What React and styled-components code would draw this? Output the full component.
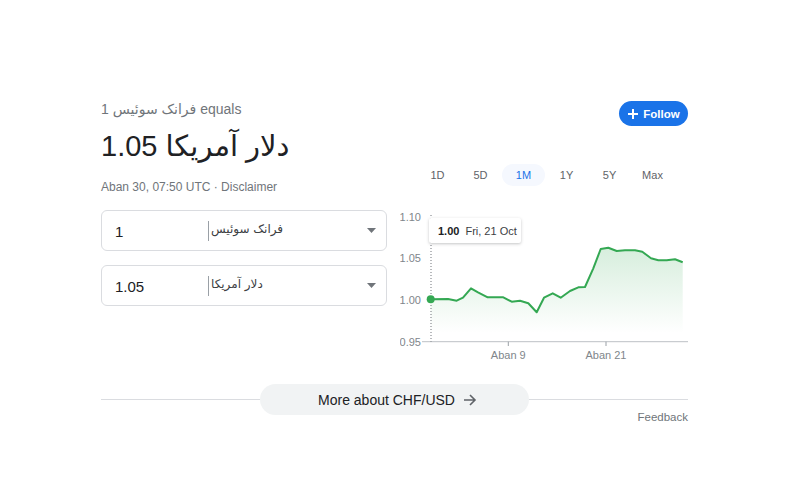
import React from 'react'
import styled, { createGlobalStyle } from 'styled-components'

const GlobalStyle = createGlobalStyle`
  body {
    margin: 0;
    background: #fff;
    font-family: 'Liberation Sans', 'DejaVu Sans', Arial, sans-serif;
    color: #202124;
  }
`

const Page = styled.div`
  padding: 101px 0 40px 101px;
  width: 587px;
`

const Card = styled.div`
  display: grid;
  grid-template-columns: 286px 1fr;
  column-gap: 13px;
`

const LeftCol = styled.div`
  display: flex;
  flex-direction: column;
`

const Equals = styled.div`
  font-size: 14px;
  line-height: 16px;
  color: #70757a;
`

const Result = styled.div`
  margin-top: 11px;
  font-size: 29px;
  line-height: 36px;
  color: #202124;
`

const Stamp = styled.div`
  margin-top: 15px;
  font-size: 12px;
  line-height: 16px;
  color: #70757a;
`

const Converter = styled.div`
  margin-top: 15px;
  display: flex;
  flex-direction: column;
  gap: 14px;
`

const Field = styled.div`
  height: 39px;
  border: 1px solid #dadce0;
  border-radius: 6px;
  display: grid;
  grid-template-columns: 106px 1fr 30px;
  align-items: center;
`

const Amount = styled.div`
  padding-left: 13px;
  font-size: 15px;
  padding-top: 2px;
`

const Unit = styled.div`
  border-left: 1px solid #9aa0a6;
  height: 20px;
  padding-left: 2px;
  font-size: 12px;
  line-height: 16px;
  color: #3c4043;
  direction: rtl;
  text-align: right;
  justify-self: start;
  font-family: 'DejaVu Sans', sans-serif;
`

const Caret = styled.svg`
  width: 9px;
  height: 5px;
  justify-self: center;
`

const RightCol = styled.div`
  display: flex;
  flex-direction: column;
`

const FollowButton = styled.button`
  align-self: flex-end;
  height: 25px;
  width: 69px;
  border: none;
  border-radius: 13px;
  background: #1a73e8;
  color: #fff;
  font-family: inherit;
  font-size: 11.5px;
  font-weight: bold;
  display: flex;
  align-items: center;
  justify-content: center;
  gap: 5px;
  padding: 0 0 0 1px;
`

const Tabs = styled.div`
  margin-top: 38px;
  padding-left: 16px;
  display: flex;
`

const Tab = styled.div`
  width: 43px;
  height: 22px;
  display: flex;
  align-items: center;
  justify-content: center;
  font-size: 11px;
  border-radius: 11px;
  color: ${p => (p.active ? '#1a73e8' : '#5f6368')};
  background: ${p => (p.active ? '#f5f8fe' : 'transparent')};
`

const ChartBox = styled.div`
  position: relative;
  margin-top: 19px;
  height: 155px;
`

const Tooltip = styled.div`
  position: absolute;
  left: 29px;
  top: 13px;
  width: 92px;
  height: 25px;
  background: #fff;
  box-shadow: 0 1px 3px rgba(60, 64, 67, 0.3);
  border-radius: 2px;
  display: flex;
  align-items: center;
  gap: 6px;
  padding-left: 9px;
  box-sizing: border-box;
  font-size: 11px;
  color: #3c4043;
  b {
    color: #202124;
  }
`

const Footer = styled.div`
  margin-top: 24px;
  display: flex;
  align-items: center;
`

const Rule = styled.div`
  flex: 1;
  height: 1px;
  background: #dadce0;
`

const MoreButton = styled.div`
  width: 269px;
  height: 31px;
  border-radius: 16px;
  background: #f1f3f4;
  display: flex;
  align-items: center;
  justify-content: center;
  gap: 8px;
  font-size: 14px;
  color: #202124;
  padding-left: 6px;
  box-sizing: border-box;
`

const Feedback = styled.div`
  margin-top: -5px;
  text-align: right;
  font-size: 11.5px;
  line-height: 14px;
  color: #70757a;
`

const points = [
  [30.7, 94.3], [48, 94], [56.7, 95.7], [63, 92.7], [71, 83.3], [78, 87.3],
  [87.7, 92.3], [103.3, 92.3], [111.7, 96.7], [120, 95.7], [128.3, 98.3],
  [136.7, 107.3], [144, 92.7], [152.7, 88.3], [160.7, 92.7], [170, 86],
  [178.3, 82.3], [185, 82], [193.3, 63.3], [200.7, 44], [208.3, 42.7],
  [216.7, 46], [225, 45.3], [235, 45.3], [242.3, 46.7], [251, 53.3],
  [258.3, 55.3], [266.7, 55.3], [275, 54.3], [282.7, 57.3],
]

const linePath = points.map((p, i) => `${i ? 'L' : 'M'}${p[0]} ${p[1]}`).join(' ')
const areaPath = `${linePath} L282.7 136.7 L30.7 136.7 Z`

const yLabels = [
  ['1.10', 11.7],
  ['1.05', 53.3],
  ['1.00', 95],
  ['0.95', 136.7],
]

const Chart = () => (
  <svg width="288" height="155" viewBox="0 0 288 155">
    <defs>
      <linearGradient id="fill" x1="0" y1="42" x2="0" y2="128" gradientUnits="userSpaceOnUse">
        <stop offset="0" stopColor="#34a853" stopOpacity="0.2" />
        <stop offset="1" stopColor="#34a853" stopOpacity="0" />
      </linearGradient>
    </defs>
    {yLabels.map(([t, y]) => (
      <text key={t} x="21" y={y + 4} textAnchor="end" fontSize="11" fill="#80868b" fontFamily="Liberation Sans, Arial, sans-serif">
        {t}
      </text>
    ))}
    <line x1="22" y1="136.7" x2="288" y2="136.7" stroke="#bdc1c6" strokeWidth="1" />
    <line x1="108.3" y1="136.7" x2="108.3" y2="141" stroke="#9aa0a6" />
    <line x1="206" y1="136.7" x2="206" y2="141" stroke="#9aa0a6" />
    <text x="108.3" y="154" textAnchor="middle" fontSize="11" fill="#80868b" fontFamily="Liberation Sans, Arial, sans-serif">Aban 9</text>
    <text x="206" y="154" textAnchor="middle" fontSize="11" fill="#80868b" fontFamily="Liberation Sans, Arial, sans-serif">Aban 21</text>
    <path d={areaPath} fill="url(#fill)" />
    <line x1="31" y1="10" x2="31" y2="136.7" stroke="#70757a" strokeDasharray="1 2" />
    <path d={linePath} fill="none" stroke="#34a853" strokeWidth="2" strokeLinejoin="round" />
    <circle cx="30.7" cy="94.3" r="4" fill="#34a853" />
  </svg>
)

const App = () => (
  <>
    <GlobalStyle />
    <Page>
      <Card>
        <LeftCol>
          <Equals>1 <span>فرانک سوئیس</span> equals</Equals>
          <Result>1.05 <span>دلار آمریکا</span></Result>
          <Stamp>Aban 30, 07:50 UTC · Disclaimer</Stamp>
          <Converter>
            <Field>
              <Amount>1</Amount>
              <Unit>فرانک سوئیس</Unit>
              <Caret viewBox="0 0 9 5"><path d="M0 0h9L4.5 5z" fill="#70757a" /></Caret>
            </Field>
            <Field>
              <Amount>1.05</Amount>
              <Unit>دلار آمریکا</Unit>
              <Caret viewBox="0 0 9 5"><path d="M0 0h9L4.5 5z" fill="#70757a" /></Caret>
            </Field>
          </Converter>
        </LeftCol>
        <RightCol>
          <FollowButton>
            <svg width="10" height="10" viewBox="0 0 10 10">
              <path d="M5 0v10M0 5h10" stroke="#fff" strokeWidth="2" />
            </svg>
            Follow
          </FollowButton>
          <Tabs>
            <Tab>1D</Tab>
            <Tab>5D</Tab>
            <Tab active>1M</Tab>
            <Tab>1Y</Tab>
            <Tab>5Y</Tab>
            <Tab>Max</Tab>
          </Tabs>
          <ChartBox>
            <Chart />
            <Tooltip>
              <b>1.00</b>
              <span>Fri, 21 Oct</span>
            </Tooltip>
          </ChartBox>
        </RightCol>
      </Card>
      <Footer>
        <Rule />
        <MoreButton>
          More about CHF/USD
          <svg width="14" height="12" viewBox="0 0 14 12">
            <path d="M1 6h11M7 1l5 5-5 5" fill="none" stroke="#5f6368" strokeWidth="1.6" />
          </svg>
        </MoreButton>
        <Rule />
      </Footer>
      <Feedback>Feedback</Feedback>
    </Page>
  </>
)

export default App
